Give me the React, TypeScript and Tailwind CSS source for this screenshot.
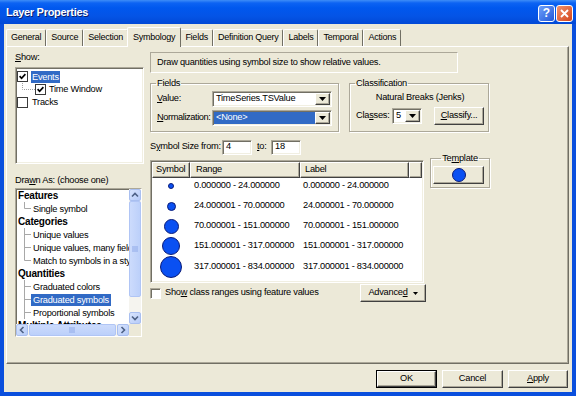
import React from "react";

const raised =
  "bg-[#ECE9D8] border border-t-white border-l-white border-r-[#404040] border-b-[#404040] shadow-[inset_-1px_-1px_0_#ACA899]";
const sunken =
  "bg-white border border-t-[#ACA899] border-l-[#ACA899] border-r-white border-b-white shadow-[inset_1px_1px_0_#716F64,inset_-1px_-1px_0_#F1EFE2]";
const etched =
  "border border-[#ACA899] shadow-[1px_1px_0_white,inset_1px_1px_0_white]";

function TriDown() {
  return (
    <svg width="7" height="4" viewBox="0 0 7 4">
      <path d="M0 0H7L3.5 4Z" fill="#000" />
    </svg>
  );
}

function Combo({ className, text, selected }: { className: string; text: string; selected?: boolean }) {
  return (
    <div className={`${sunken} ${className} shrink-0 h-[16px] p-[1px] flex`}>
      <div
        className={`flex-1 flex items-center pl-[2px] leading-none whitespace-nowrap ${
          selected ? "bg-[#316AC5] text-white" : ""
        }`}
      >
        {text}
      </div>
      <div className={`${raised} w-[15px] flex items-center justify-center`}>
        <TriDown />
      </div>
    </div>
  );
}

function TreeCheck({ checked }: { checked: boolean }) {
  return (
    <span className="inline-flex w-[11px] h-[11px] bg-white border border-[#3A3A3A] items-center justify-center shrink-0">
      {checked && (
        <svg width="7" height="7" viewBox="0 0 7 7">
          <path d="M0.6 3.2 L2.6 5.3 L6.4 1.2" stroke="#000" strokeWidth="1.7" fill="none" />
        </svg>
      )}
    </span>
  );
}

function ScrollBtn({ dir }: { dir: "up" | "down" | "left" | "right" }) {
  const d =
    dir === "up"
      ? "M3 7.5L6 4.5L9 7.5"
      : dir === "down"
      ? "M3 4.5L6 7.5L9 4.5"
      : dir === "left"
      ? "M7.5 3L4.5 6L7.5 9"
      : "M4.5 3L7.5 6L4.5 9";
  return (
    <div className="w-[12px] h-[12px] shrink-0 rounded-[2px] bg-[linear-gradient(135deg,#D8E4FD,#B6CBF8)] border border-[#A9BFF0] flex items-center justify-center">
      <svg width="12" height="12" viewBox="0 0 12 12" className="-m-px">
        <path d={d} stroke="#4D6185" strokeWidth="1.6" fill="none" />
      </svg>
    </div>
  );
}

const listItems: { t: string; bold?: boolean; conn?: "mid" | "last"; sel?: boolean }[] = [
  { t: "Features", bold: true },
  { t: "Single symbol", conn: "last" },
  { t: "Categories", bold: true },
  { t: "Unique values", conn: "mid" },
  { t: "Unique values, many fields", conn: "mid" },
  { t: "Match to symbols in a style", conn: "last" },
  { t: "Quantities", bold: true },
  { t: "Graduated colors", conn: "mid" },
  { t: "Graduated symbols", conn: "mid", sel: true },
  { t: "Proportional symbols", conn: "mid" },
  { t: "Multiple Attributes", bold: true },
  { t: "Quantity by category", conn: "last" },
];

const rows = [
  { d: 5, r: "0.000000 - 24.000000" },
  { d: 8, r: "24.000001 - 70.000000" },
  { d: 14, r: "70.000001 - 151.000000" },
  { d: 17, r: "151.000001 - 317.000000" },
  { d: 21, r: "317.000001 - 834.000000" },
];

const tabs = ["General", "Source", "Selection", "Symbology", "Fields", "Definition Query", "Labels", "Temporal", "Actions"];

function Circle({ d }: { d: number }) {
  return (
    <svg width={d + 1} height={d + 1} viewBox={`0 0 ${d + 1} ${d + 1}`}>
      <circle cx={(d + 1) / 2} cy={(d + 1) / 2} r={d / 2} fill="#0A50F2" stroke="#0B1C78" strokeWidth="1" />
    </svg>
  );
}

export default function App() {
  return (
    <div className="w-[576px] h-[396px] flex flex-col font-['Liberation_Sans',Arial,sans-serif] text-[9.25px] tracking-[-0.25px] text-black bg-[#0A4FDD] overflow-hidden">
      {/* Title bar */}
      <div className="h-[24px] shrink-0 flex items-center pl-[6px] pr-[3px] bg-[linear-gradient(to_bottom,#3E8DF7_0px,#0C63F3_3px,#0058EE_8px,#0454E6_16px,#0249D6_24px)]">
        <span className="text-white font-bold text-[11px] tracking-[-0.3px] [text-shadow:1px_1px_0_#0A1E6E]">
          Layer Properties
        </span>
        <div className="ml-auto flex gap-[1px] mt-[2px]">
          <div className="w-[17px] h-[17px] rounded-[3px] border border-white bg-[linear-gradient(135deg,#6FA0FA,#2158D9)] flex items-center justify-center text-white font-bold text-[12px] leading-none tracking-normal">
            ?
          </div>
          <div className="w-[17px] h-[17px] rounded-[3px] border border-white bg-[linear-gradient(135deg,#F3936D,#D2441B)] flex items-center justify-center">
            <svg width="9" height="9" viewBox="0 0 9 9">
              <path d="M1 1L8 8M8 1L1 8" stroke="white" strokeWidth="1.8" />
            </svg>
          </div>
        </div>
      </div>

      {/* Body */}
      <div className="flex-1 flex flex-col mx-[4px] mb-[4px] bg-[#ECE9D8]">
        {/* Tabs */}
        <div className="flex items-end h-[22px] pl-[2px] pt-[3px] text-[9px]">
          {tabs.map((t) => {
            const sel = t === "Symbology";
            return (
              <div
                key={t}
                className={
                  sel
                    ? "h-[20px] -mb-px relative z-10 px-[5px] -mx-[1px] flex items-start pt-[3px] bg-[#ECE9D8] border-t border-l border-white border-r border-r-[#716F64] rounded-t-[2px] whitespace-nowrap"
                    : "h-[17px] px-[4px] flex items-center border-t border-l border-white border-r border-r-[#716F64] rounded-t-[2px] whitespace-nowrap"
                }
              >
                {t}
              </div>
            );
          })}
        </div>

        {/* Panel */}
        <div className="h-[318px] ml-[2px] mr-[3px] border border-t-white border-l-white border-r-[#716F64] border-b-[#716F64] shadow-[inset_-1px_-1px_0_#ACA899] flex pl-[8px]">
          {/* Left column */}
          <div className="w-[130px] flex flex-col">
            <div className="h-[12px] leading-[12px] mt-[4px]">
              <u>S</u>how:
            </div>
            <div className={`${sunken} mt-[4px] w-[129px] h-[97px] p-[1px] pt-[2px]`}>
              <div className="flex items-center h-[13px]">
                <TreeCheck checked />
                <span className="ml-[3px] px-[1px] bg-[#316AC5] text-white leading-[12px]">Events</span>
              </div>
              <div className="flex items-center h-[13px]">
                <svg width="18" height="13" viewBox="0 0 18 13" className="shrink-0">
                  <path d="M5.5 0V6.5H18" stroke="#A0A0A0" strokeWidth="1" strokeDasharray="1 1" fill="none" />
                </svg>
                <TreeCheck checked />
                <span className="ml-[3px]">Time Window</span>
              </div>
              <div className="flex items-center h-[13px]">
                <TreeCheck checked={false} />
                <span className="ml-[4px]">Tracks</span>
              </div>
            </div>
            <div className="h-[12px] leading-[12px] mt-[10px]">
              Dra<u>w</u>n As: (choose one)
            </div>
            <div className={`${sunken} mt-[2px] w-[127px] h-[149px] flex flex-col`}>
              <div className="flex h-[135px]">
                <div className="flex-1 overflow-hidden">
                  {listItems.map((it) => (
                    <div key={it.t} className="flex items-center h-[13px] whitespace-nowrap">
                      {it.bold ? (
                        <span className="pl-[2px] font-bold text-[10px] tracking-[-0.2px]">{it.t}</span>
                      ) : (
                        <>
                          <svg width="15" height="13" viewBox="0 0 15 13" className="shrink-0">
                            <path
                              d={it.conn === "last" ? "M8.5 0V6.5H15" : "M8.5 0V13M8.5 6.5H15"}
                              stroke="#A8A8A8"
                              strokeWidth="1"
                              fill="none"
                            />
                          </svg>
                          <span
                            className={`px-[2px] leading-[12px] ${it.sel ? "bg-[#316AC5] text-white" : ""}`}
                          >
                            {it.t}
                          </span>
                        </>
                      )}
                    </div>
                  ))}
                </div>
                <div className="w-[12px] flex flex-col bg-[#F5F4EF]">
                  <ScrollBtn dir="up" />
                  <div className="flex-1 flex flex-col">
                    <div className="h-[96px] rounded-[2px] bg-[linear-gradient(to_right,#CCDBFC,#BCD0FA)] border border-[#B0C5F5] flex items-center justify-center">
                      <svg width="6" height="7" viewBox="0 0 6 7">
                        <path d="M0 1H6M0 3H6M0 5H6" stroke="#8FA9E8" strokeWidth="1" />
                      </svg>
                    </div>
                  </div>
                  <ScrollBtn dir="down" />
                </div>
              </div>
              <div className="flex h-[12px]">
                <div className="flex-1 flex bg-[#F5F4EF]">
                  <ScrollBtn dir="left" />
                  <div className="flex-1 flex px-[1px]">
                    <div className="flex-1 rounded-[2px] bg-[linear-gradient(to_bottom,#CCDBFC,#BCD0FA)] border border-[#B0C5F5] flex items-center justify-center">
                      <svg width="7" height="6" viewBox="0 0 7 6">
                        <path d="M1 0V6M3 0V6M5 0V6" stroke="#8FA9E8" strokeWidth="1" />
                      </svg>
                    </div>
                  </div>
                  <ScrollBtn dir="right" />
                </div>
                <div className="w-[12px] bg-[#ECE9D8]" />
              </div>
            </div>
          </div>

          {/* Right column */}
          <div className="ml-[5px] w-[340px] flex flex-col">
            <div className="mt-[5px] w-[308px] h-[21px] border border-t-[#ACA899] border-l-[#ACA899] border-r-white border-b-white flex items-center pl-[6px] whitespace-nowrap">
              Draw quantities using symbol size to show relative values.
            </div>

            <div className="flex mt-[4px] gap-[10px]">
              <fieldset className={`${etched} w-[188px] pl-[6px] pr-[6px] pb-[5px]`}>
                <legend className="px-[1px] h-[12px] leading-[12px] -ml-[1px]">Fields</legend>
                <div className="flex items-center mt-[2px]">
                  <span className="w-[55px] shrink-0 whitespace-nowrap">
                    <u>V</u>alue:
                  </span>
                  <Combo className="w-[120px]" text="TimeSeries.TSValue" />
                </div>
                <div className="flex items-center mt-[3px]">
                  <span className="w-[55px] shrink-0 whitespace-nowrap tracking-[-0.4px]">
                    <u>N</u>ormalization:
                  </span>
                  <Combo className="w-[120px]" text={"<None>"} selected />
                </div>
              </fieldset>
              <fieldset className={`${etched} w-[140px] pl-[6px] pr-[4px] pb-[6px]`}>
                <legend className="px-[1px] h-[12px] leading-[12px] -ml-[1px]">Classification</legend>
                <div className="mt-[2px] h-[12px] leading-[12px] text-center whitespace-nowrap">Natural Breaks (Jenks)</div>
                <div className="flex items-center mt-[4px] h-[18px]">
                  <span className="w-[36px] shrink-0 whitespace-nowrap">
                    Cla<u>s</u>ses:
                  </span>
                  <Combo className="w-[30px]" text="5" />
                  <div className={`${raised} ml-[12px] w-[50px] h-[18px] flex items-center justify-center shrink-0`}>
                    <span>
                      <u>C</u>lassify...
                    </span>
                  </div>
                </div>
              </fieldset>
            </div>

            <div className="flex items-center mt-[7px] h-[16px]">
              <span className="w-[72px] shrink-0 whitespace-nowrap">
                S<u>y</u>mbol Size from:
              </span>
              <div className={`${sunken} w-[30px] h-[15px] flex items-center pl-[3px]`}>4</div>
              <span className="ml-[5px] w-[14px]">
                <u>t</u>o:
              </span>
              <div className={`${sunken} w-[30px] h-[15px] flex items-center pl-[3px]`}>18</div>
            </div>

            <div className="flex items-start">
              <div className={`${sunken} mt-[5px] w-[274px] h-[123px] p-[1px]`}>
                <div className="grid grid-cols-[38px_110px_109px_13px] h-[14px]">
                  <div className={`${raised} flex items-center pl-[3px]`}>Symbol</div>
                  <div className={`${raised} flex items-center pl-[5px]`}>Range</div>
                  <div className={`${raised} flex items-center pl-[4px]`}>Label</div>
                  <div className={`${raised}`} />
                </div>
                {rows.map((r) => (
                  <div key={r.r} className="grid grid-cols-[38px_110px_109px_13px] h-[20px] items-center">
                    <div className="flex items-center justify-center">
                      <Circle d={r.d} />
                    </div>
                    <div className="pl-[4px] whitespace-nowrap">{r.r}</div>
                    <div className="pl-[3px] whitespace-nowrap">{r.r}</div>
                    <div />
                  </div>
                ))}
              </div>
              <fieldset className={`${etched} ml-[6px] -mt-[3px] w-[60px] px-[2px] pb-[3px]`}>
                <legend className="mx-auto px-[1px] h-[12px] leading-[12px]">
                  Te<u>m</u>plate
                </legend>
                <div className={`${raised} mt-[2px] w-[51px] h-[18px] flex items-center justify-center`}>
                  <Circle d={13} />
                </div>
              </fieldset>
            </div>

            <div className="flex items-center mt-[1px] w-[276px] h-[18px]">
              <span className="w-[11px] h-[11px] shrink-0 bg-white border border-t-[#ACA899] border-l-[#ACA899] border-r-white border-b-white shadow-[inset_1px_1px_0_#716F64]" />
              <span className="ml-[4px] whitespace-nowrap">
                Sho<u>w</u> class ranges using feature values
              </span>
              <div className={`${raised} ml-auto w-[66px] h-[18px] flex items-center justify-center gap-[5px] shrink-0`}>
                <span>
                  Advance<u>d</u>
                </span>
                <svg width="5" height="3" viewBox="0 0 5 3">
                  <path d="M0 0H5L2.5 3Z" fill="#000" />
                </svg>
              </div>
            </div>
          </div>
        </div>

        {/* Buttons */}
        <div className="flex justify-end gap-[5px] mt-[6px] pr-[4px]">
          <div className="w-[61px] h-[18px] border border-black flex">
            <div className="flex-1 flex items-center justify-center border border-t-white border-l-white border-r-[#404040] border-b-[#404040] shadow-[inset_-1px_-1px_0_#ACA899]">
              OK
            </div>
          </div>
          <div className={`${raised} w-[61px] h-[18px] flex items-center justify-center`}>Cancel</div>
          <div className={`${raised} w-[60px] h-[18px] flex items-center justify-center`}>
            <span>
              <u>A</u>pply
            </span>
          </div>
        </div>
      </div>
    </div>
  );
}
